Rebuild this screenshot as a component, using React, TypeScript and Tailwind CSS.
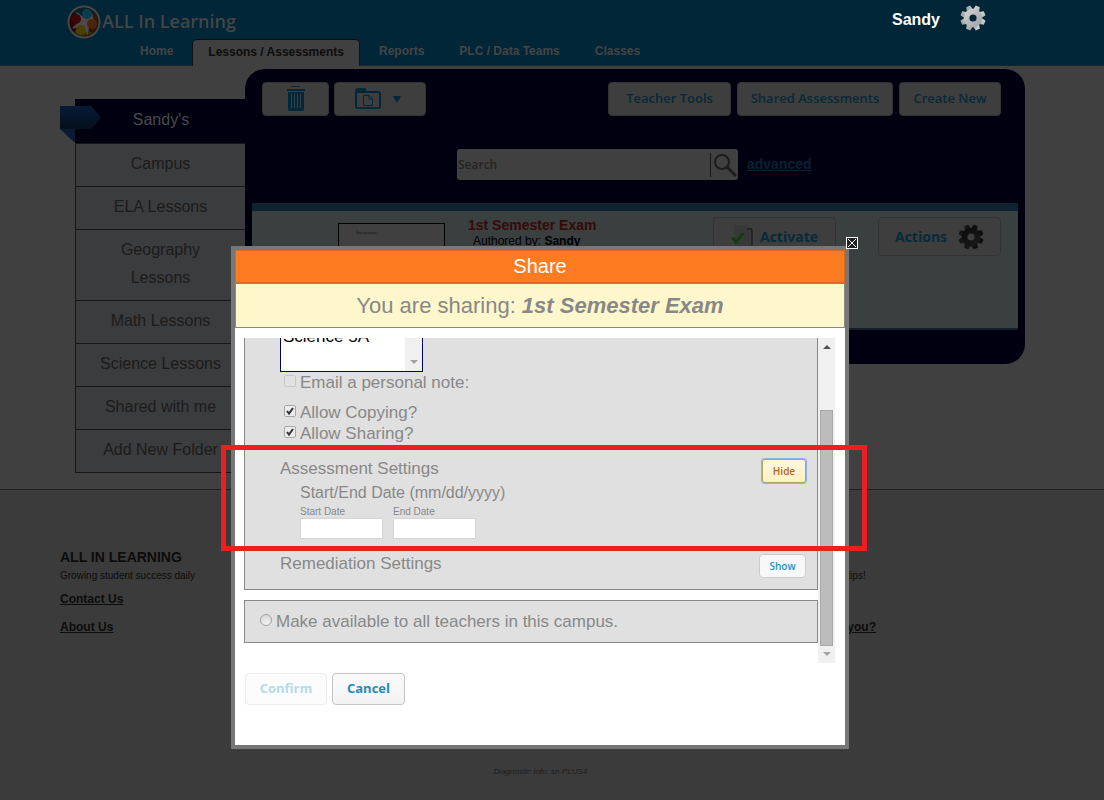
import type { ReactNode } from "react";

const NAV_ITEMS = ["Home", "Lessons / Assessments", "Reports", "PLC / Data Teams", "Classes"];
const ACTIVE_NAV = "Lessons / Assessments";

const FOLDERS = [
  "Sandy's",
  "Campus",
  "ELA Lessons",
  "Geography Lessons",
  "Math Lessons",
  "Science Lessons",
  "Shared with me",
  "Add New Folder",
];

const Gear = ({ from, to, hole, id }: { from: string; to: string; hole: string; id: string }) => (
  <svg width="26" height="26" viewBox="-13 -13 26 26" aria-hidden="true">
    <defs>
      <linearGradient id={id} x1="0" y1="0" x2="1" y2="1">
        <stop offset="0" stopColor={from} />
        <stop offset="1" stopColor={to} />
      </linearGradient>
    </defs>
    <g fill={`url(#${id})`}>
      {[22.5, 67.5, 112.5, 157.5].map((angle) => (
        <path
          key={angle}
          transform={`rotate(${angle})`}
          d="M-3.2 -8 L-2.2 -12.6 H2.2 L3.2 -8 V8 L2.2 12.6 H-2.2 L-3.2 8 Z"
        />
      ))}
      <circle r="9.2" />
    </g>
    <circle r="3.6" fill={hole} />
  </svg>
);

const Logo = () => (
  <svg width="34" height="34" viewBox="0 0 34 34" aria-hidden="true">
    <circle cx="17" cy="17" r="16.5" fill="#484848" />
    <circle cx="17" cy="17" r="14.5" fill="#1c0d08" />
    <path d="M6 8 A14.5 14.5 0 0 1 28 8 L22 14 H12 Z" fill="#08222c" />
    <path d="M28 8 A14.5 14.5 0 0 1 26 28 L20 20 Z" fill="#351707" />
    <path d="M26 28 A14.5 14.5 0 0 1 7 27 L14 20 Z" fill="#3a2c05" />
    <path d="M7 27 A14.5 14.5 0 0 1 6 8 L13 14 Z" fill="#2a0405" />
    <path
      d="M10 8 Q13 12 18 13 Q23 13 25 9 Q24 14 27 17 Q21 20 20 27 Q18 22 14 21 Q9 21 6 23 Q11 20 12 16 Q12 12 10 8 Z"
      fill="#4a4a4a"
      stroke="#4a4a4a"
      strokeWidth="2"
    />
    <circle cx="20" cy="9" r="5" fill="#0c3c4c" />
    <circle cx="9" cy="14" r="5" fill="#3c0507" />
    <circle cx="25" cy="19" r="5" fill="#4c240c" />
    <circle cx="14" cy="25" r="5" fill="#4c3f06" />
  </svg>
);

const Header = () => (
  <header className="border-b border-[#1c2427] bg-[#002638] pr-[19px]">
    <div className="mx-auto flex max-w-[965px] justify-between">
      <div>
        <div className="flex h-[39px] items-center gap-px pt-1 pl-[7px]">
          <Logo />
          <span className="font-['Open_Sans'] text-[18px] font-semibold text-[#454545]">ALL In Learning</span>
        </div>
        <nav className="-mb-px ml-16 flex gap-[3px] text-[12px] font-bold">
          {NAV_ITEMS.map((item) => (
            <a
              key={item}
              href="#"
              className={
                item === ACTIVE_NAV
                  ? "h-[27px] rounded-t-[5px] border border-b-0 border-[#101010] bg-[#404040] px-[15px] pt-[3px] leading-[18px] text-[#0d0d0d]"
                  : "h-[27px] px-4 pt-[3px] leading-[18px] text-[#454545]"
              }
            >
              {item}
            </a>
          ))}
        </nav>
      </div>
      <div className="flex h-10 items-center gap-5 pr-[39px] text-[16px] font-bold text-white">
        Sandy
        <button type="button" aria-label="Account settings" className="-mt-1">
          <Gear id="gear-light" from="#d8d8d8" to="#9c9c9c" hole="#002638" />
        </button>
      </div>
    </div>
  </header>
);

const Ribbon = () => (
  <svg className="absolute -left-[15px] top-[7px]" width="41" height="37" viewBox="0 0 41 37" aria-hidden="true">
    <defs>
      <linearGradient id="ribbon" x1="0" y1="0" x2="0" y2="1">
        <stop offset="0" stopColor="#071a36" />
        <stop offset="1" stopColor="#04101c" />
      </linearGradient>
    </defs>
    <path d="M0 23 H15 V36 H14 Z" fill="#091a31" />
    <path d="M0 0 H31 L40 10 V13 L31 23 H0 Z" fill="url(#ribbon)" />
  </svg>
);

const Sidebar = () => (
  <aside className="mt-[33px] w-[170px] shrink-0 border-b border-[#161718] text-center text-[16px] leading-7">
    {FOLDERS.map((folder, i) =>
      i === 0 ? (
        <div key={folder} className="relative h-11 bg-[#000010] py-[7px] pl-0.5 text-[#4a4a4a]">
          <Ribbon />
          <a href="#">{folder}</a>
        </div>
      ) : (
        <div key={folder} className="border-t border-l border-[#161718] bg-[#3b3c3d] px-5 pt-1.5 pb-2 text-[#1b1b1b]">
          <a href="#">{folder}</a>
        </div>
      ),
    )}
  </aside>
);

const ToolButton = ({ children, label, className }: { children: ReactNode; label?: string; className: string }) => (
  <button
    type="button"
    aria-label={label}
    className={`flex h-[34px] items-center justify-center rounded-[4px] border border-[#333333] bg-[#3e3e3e] font-['Open_Sans'] text-[13px] font-semibold text-[#092936] ${className}`}
  >
    {children}
  </button>
);

const TrashIcon = () => (
  <svg width="18" height="26" viewBox="0 0 18 26" fill="#00283a" aria-hidden="true">
    <rect x="4" y="0" width="9" height="1" />
    <rect x="0" y="3" width="18" height="2" />
    <path d="M1 6 H17 V23 Q17 25 15 25 H3 Q1 25 1 23 Z" />
    <path d="M4.500 8 V22 M7.500 8 V22 M10.500 8 V22 M13.500 8 V22" stroke="#3e3e3e" strokeWidth="1" />
  </svg>
);

const FolderIcon = () => (
  <svg width="26" height="22" viewBox="0 0 26 22" aria-hidden="true">
    <path d="M1 19 V3 Q1 1 3 1 H10 V4 H23 Q25 4 25 6 V19 Q25 20 23 20 H3 Q1 20 1 19 Z" fill="none" stroke="#00283a" strokeWidth="2" />
    <path d="M1 1 H10 V5 H1 Z" fill="#00283a" />
    <path d="M8.500 7.500 H14 L17.500 11 V17.500 H8.500 Z M14 7.500 V11 H17.500" fill="none" stroke="#00283a" />
  </svg>
);

const SearchBar = () => (
  <div className="mt-[33px] flex items-center pl-[212px]">
    <div className="flex h-[31px] w-[281px] items-center rounded-[3px] bg-[#404040]">
      <input
        type="text"
        placeholder="Search"
        aria-label="Search"
        className="h-full w-[253px] pl-px font-['Open_Sans'] text-[12px] font-semibold outline-none placeholder:text-[#242424]"
      />
      <button type="button" aria-label="Run search" className="flex h-6 items-center border-l border-[#151515] pl-0.5">
        <svg width="24" height="24" viewBox="0 0 24 24" fill="none" stroke="#1d1d1d" aria-hidden="true">
          <circle cx="9" cy="9" r="7" strokeWidth="2" />
          <path d="M14 14 L22 22" strokeWidth="3" strokeLinecap="round" />
        </svg>
      </button>
    </div>
    <a href="#" className="ml-[9px] text-[14px] font-bold text-[#062233] underline">
      advanced
    </a>
  </div>
);

const ExamRow = () => (
  <div className="mx-[7px] mt-[23px] flex h-[127px] border-t-8 border-b-2 border-t-[#0e2232] border-b-[#151f2b] bg-[#3a3f40]">
    <div className="mt-3 ml-[86px] h-24 w-[107px] shrink-0 border border-black bg-[#404040] p-2 pl-[17px] text-[3px] leading-[3px] text-[#151515]">
      State questions
    </div>
    <div className="ml-[23px] pt-1.5 text-[14px] leading-4 font-bold text-[#380a06]">
      1st Semester Exam
      <div className="pl-[5px] text-[12px] font-normal text-black">
        Authored by: <b>Sandy</b>
      </div>
    </div>
    <div className="mt-1.5 mr-[17px] ml-auto flex items-start gap-[42px] font-['Open_Sans'] text-[14px] font-bold text-[#072a3b]">
      <button type="button" className="flex h-[39px] w-[123px] items-center gap-1.5 rounded-[4px] border border-[#313335] bg-[#3e3e3e] pl-4">
        <svg width="24" height="28" viewBox="0 0 24 28" aria-hidden="true">
          <path d="M4 2 H17 L22 7 V28 H5 Z" fill="#383838" />
          <path d="M17 6 H22 V28" fill="none" stroke="#151515" />
          <path d="M1 15 L4 14 L6 17 L12 10 L15 10 L6 21 Z" fill="#0f3d10" />
        </svg>
        Activate
      </button>
      <button type="button" className="flex h-[39px] w-[123px] items-center justify-between rounded-[4px] border border-[#313335] bg-[#3e3e3e] px-4">
        Actions
        <Gear id="gear-dark" from="#0a0a0a" to="#1c1c1c" hole="#3e3e3e" />
      </button>
    </div>
  </div>
);

const LessonsPanel = () => (
  <section className="mt-[3px] h-[295px] min-w-0 flex-1 rounded-tl-[20px] rounded-r-[20px] bg-[#000010] pt-[13px]">
    <div className="flex pr-6 pl-[17px]">
      <ToolButton label="Delete" className="w-[67px]">
        <TrashIcon />
      </ToolButton>
      <ToolButton label="Move to folder" className="ml-[5px] w-[92px] gap-3 pr-1">
        <FolderIcon />
        <svg width="8" height="7" viewBox="0 0 8 7" aria-hidden="true">
          <path d="M0 0 H8 L4 7 Z" fill="#00283a" />
        </svg>
      </ToolButton>
      <div className="ml-auto flex gap-1.5">
        <ToolButton className="w-[123px]">Teacher Tools</ToolButton>
        <ToolButton className="w-[156px]">Shared Assessments</ToolButton>
        <ToolButton className="w-[102px]">Create New</ToolButton>
      </div>
    </div>
    <SearchBar />
    <ExamRow />
  </section>
);

const Footer = () => (
  <footer className="flex-1 border-t border-[#202020] bg-[#3b3b3b] pr-[19px] text-[#0c0c0c]">
    <div className="mx-auto flex max-w-[965px] justify-between pt-[59px] pr-[149px]">
      <div>
        <h2 className="text-[14px] leading-4 font-bold">ALL IN LEARNING</h2>
        <p className="mt-[3px] text-[10px] leading-4">Growing student success daily</p>
        <a href="#" className="mt-[7px] block text-[12px] leading-4 font-bold underline">
          Contact Us
        </a>
        <a href="#" className="mt-3 block text-[12px] leading-4 font-bold underline">
          About Us
        </a>
      </div>
      <div className="pt-[19px]">
        <p className="text-[10px] leading-4">tips!</p>
        <a href="#" className="mt-[35px] block text-[12px] leading-4 font-bold underline">
          you?
        </a>
      </div>
    </div>
    <p className="mt-[129px] pr-1 text-center text-[8px] leading-4 text-[#1c1c1c] italic">Diagnostic Info: sn-PLUS4</p>
  </footer>
);

const CheckOption = ({ label, checked, disabled }: { label: string; checked?: boolean; disabled?: boolean }) => (
  <label className="flex items-center gap-1 pl-1 leading-[21px]">
    <span className="relative -mt-1 flex">
      <input
        type="checkbox"
        defaultChecked={checked}
        disabled={disabled}
        className={`size-3 appearance-none rounded-[2px] border ${
          disabled ? "border-[#c8c8c8] bg-[#e2e2e2]" : "border-[#a8a8a8] bg-[#ebebeb]"
        }`}
      />
      {checked && (
        <svg className="pointer-events-none absolute inset-0" width="12" height="12" viewBox="0 0 12 12" aria-hidden="true">
          <path d="M3 6 L5 8.500 L9 3" fill="none" stroke="#333333" strokeWidth="2" />
        </svg>
      )}
    </span>
    {label}
  </label>
);

const DateField = ({ label }: { label: string }) => (
  <label className="block text-[10px] leading-3">
    {label}
    <input type="text" className="block h-[21px] w-[83px] border border-[#d4d4d4] bg-white px-1" />
  </label>
);

const Arrow = ({ up, color }: { up?: boolean; color: string }) => (
  <svg className="mx-auto" width="8" height="4" viewBox="0 0 8 4" aria-hidden="true">
    <path d={up ? "M0 4 L4 0 L8 4 Z" : "M0 0 L4 4 L8 0 Z"} fill={color} />
  </svg>
);

const ScrollTrack = () => (
  <div className="flex w-[17px] flex-col bg-[#f0f0f0] py-[7px]">
    <Arrow up color="#505050" />
    <div className="mx-0.5 mt-[61px] mb-1.5 flex-1 border border-[#a8a8a8] bg-[#bcbcbc]" />
    <Arrow color="#a3a3a3" />
  </div>
);

const ShareForm = () => (
  <div className="mt-[10px] mr-[10px] ml-[9px] flex h-[325px] text-[#888888]">
    <div className="flex min-w-0 flex-1 flex-col justify-end gap-[10px] overflow-hidden bg-white pb-5 text-[17px]">
      <div className="border border-[#888888] bg-[#e0e0e0] pr-[11px] pb-[11px] pl-[35px]">
        <div className="flex h-[46px] w-[143px] border border-[#000066] bg-white">
          <select multiple aria-label="Class" className="h-11 min-w-0 flex-1 overflow-hidden text-[17px] text-black outline-none">
            <option className="min-h-0 px-0.5 py-0 leading-6">Science 5A</option>
          </select>
          <div className="flex w-[17px] items-end bg-[#f0f0f0] pb-[7px]">
            <Arrow color="#a3a3a3" />
          </div>
        </div>
        <CheckOption label="Email a personal note:" disabled />
        <div className="mt-[9px]">
          <CheckOption label="Allow Copying?" checked />
          <CheckOption label="Allow Sharing?" checked />
        </div>
        <div className="mt-[13px] flex items-start justify-between">
          <div className="leading-6">
            <h3>Assessment Settings</h3>
            <div className="pl-5">
              <p className="text-[16px]">Start/End Date (mm/dd/yyyy)</p>
              <div className="mt-px flex gap-[10px]">
                <DateField label="Start Date" />
                <DateField label="End Date" />
              </div>
            </div>
          </div>
          <button
            type="button"
            className="mt-0.5 h-6 w-11 rounded-[3px] border border-[#a8a860] bg-linear-to-b from-[#fff8e0] to-[#fff0c0] font-['Open_Sans'] text-[10px] font-semibold text-[#b5651a] ring-1 ring-[#8fb4ea]"
          >
            Hide
          </button>
        </div>
        <div className="mt-[13px] flex items-start justify-between leading-6">
          <h3>Remediation Settings</h3>
          <button
            type="button"
            className="mt-0.5 h-6 w-[47px] rounded-[4px] border border-[#cccccc] bg-[#f8f8f8] font-['Open_Sans'] text-[10px] leading-5 font-semibold text-[#1c94c4]"
          >
            Show
          </button>
        </div>
      </div>
      <div className="flex h-[43px] shrink-0 items-center border border-[#888888] bg-[#e0e0e0] pl-[15px]">
        <label className="flex items-center gap-1">
          <input type="radio" className="-mt-1 size-3 appearance-none rounded-full border border-[#a0a0a0] bg-linear-to-b from-[#d8d8d8] to-[#f2f2f2]" />
          Make available to all teachers in this campus.
        </label>
      </div>
    </div>
    <ScrollTrack />
  </div>
);

const ShareDialog = () => (
  <div
    role="dialog"
    aria-label="Share"
    className="relative w-[618px] border-4 border-[#777777] bg-white pb-10"
  >
    <button type="button" aria-label="Close" className="absolute -top-[13px] -right-[13px] size-3">
      <svg width="12" height="12" viewBox="0 0 12 12" stroke="#ffffff" aria-hidden="true">
        <rect x="0.500" y="0.500" width="11" height="11" fill="#202020" />
        <path d="M2 2 L10 10 M10 2 L2 10" />
      </svg>
    </button>
    <h1 className="border border-[#d86a20] bg-[#fd7c22] text-center text-[20px] leading-[31px] text-white">Share</h1>
    <p className="h-[45px] border border-[#888888] bg-[#fdf7cb] text-center text-[22px] leading-[43px] text-[#888888]">
      You are sharing: <b className="italic">1st Semester Exam</b>
    </p>
    <ShareForm />
    <div className="mt-[10px] ml-[10px] flex gap-[5px] font-['Open_Sans'] text-[13px] font-bold">
      <button type="button" disabled className="h-8 w-[82px] rounded-[4px] border border-[#ececec] bg-[#fcfcfc] text-[#b0dced]">
        Confirm
      </button>
      <button
        type="button"
        className="h-8 w-[73px] rounded-[4px] border border-[#c4c4c4] bg-linear-to-b from-[#fafafa] to-[#f3f3f3] text-[#1c8cc4]"
      >
        Cancel
      </button>
    </div>
    {/* highlight around the assessment settings */}
    <div className="pointer-events-none absolute top-[195px] -right-[22px] -left-[14px] h-[106px] border-5 border-[#ee1c25]" />
  </div>
);

export default function App() {
  return (
    <div className="flex min-h-screen flex-col bg-[#404040] font-['Liberation_Sans',Arial,sans-serif]">
      <Header />
      <main className="pr-[19px] pb-4">
        <div className="mx-auto flex max-w-[965px] items-start pl-[15px]">
          <Sidebar />
          <LessonsPanel />
        </div>
      </main>
      <Footer />
      <div className="fixed inset-0 flex items-start justify-center pt-[246px] pr-6">
        <ShareDialog />
      </div>
    </div>
  );
}
